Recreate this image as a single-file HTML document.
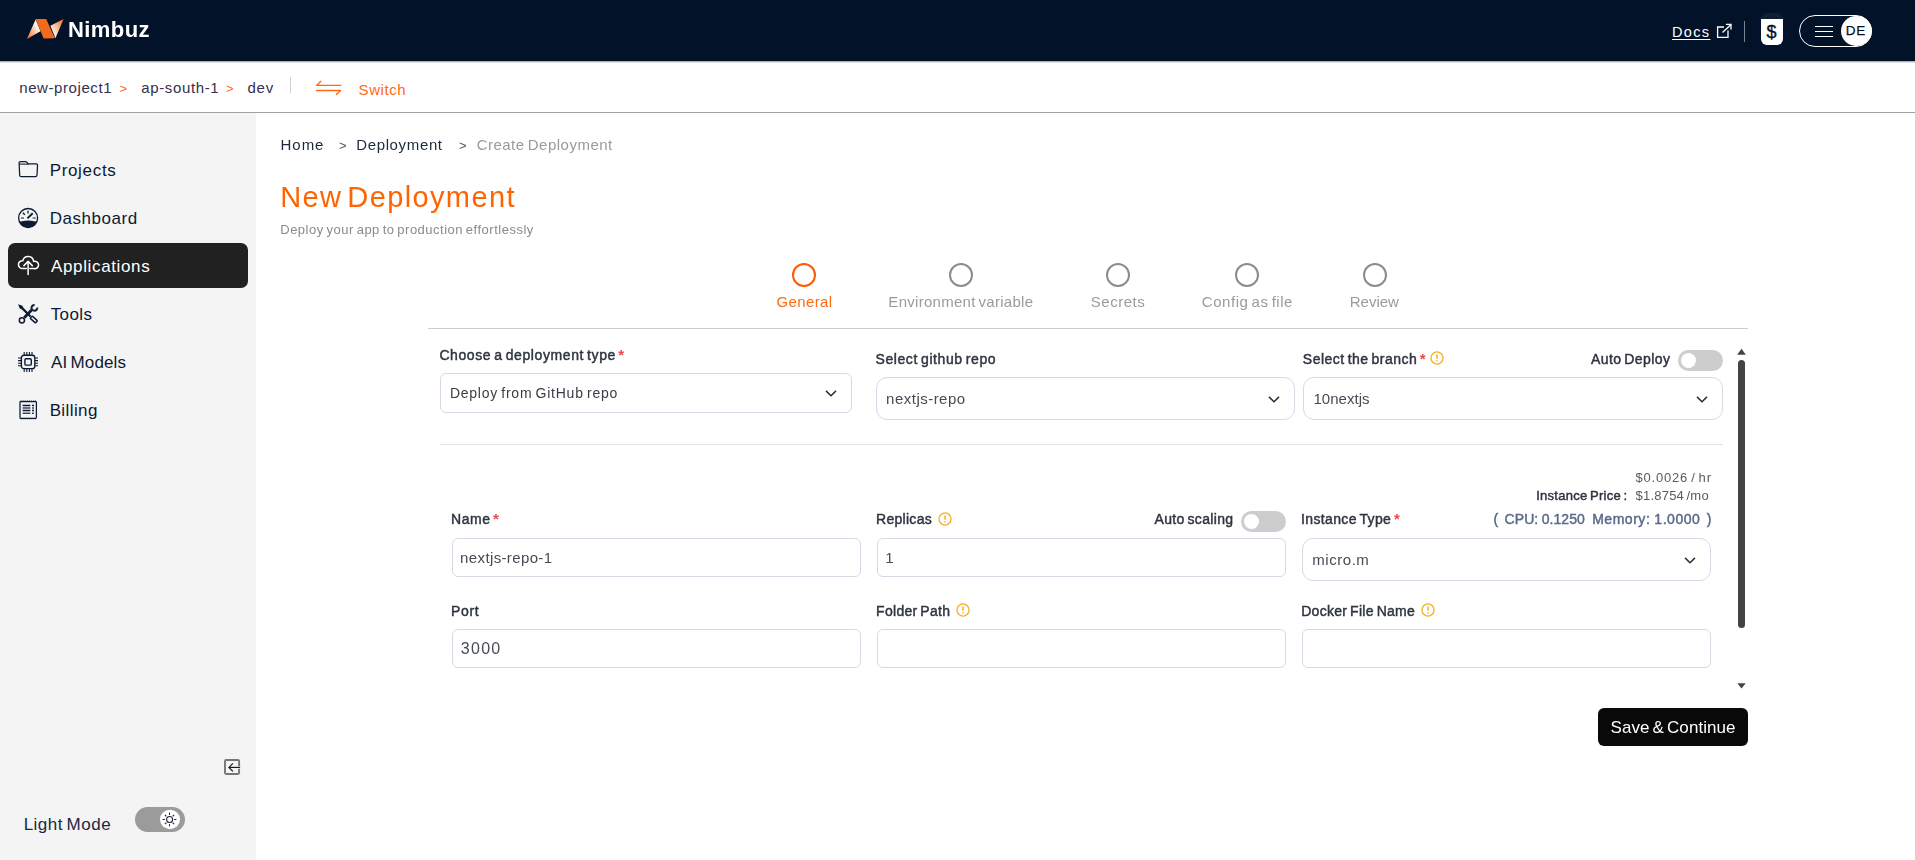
<!DOCTYPE html>
<html>
<head>
<meta charset="utf-8">
<style>
*{box-sizing:border-box;margin:0;padding:0}
html,body{width:1915px;height:860px;overflow:hidden;background:#fff;font-family:"Liberation Sans",sans-serif;color:#1e293b}
.abs{position:absolute}
.t{position:absolute;white-space:pre;line-height:1}
svg{position:absolute;overflow:visible}
</style>
</head>
<body>
<div class="abs" style="left:0px;top:0px;width:1915px;height:61px;background:#021228;"></div>
<svg style="left:0;top:0" width="80" height="61" viewBox="0 0 80 61">
<defs>
<linearGradient id="lg1" x1="0" y1="1" x2="1" y2="0"><stop offset="0" stop-color="#f26a1b"/><stop offset="0.75" stop-color="#fff"/></linearGradient>
<linearGradient id="lg2" x1="0" y1="1" x2="1" y2="0"><stop offset="0.15" stop-color="#fff"/><stop offset="1" stop-color="#f26a1b"/></linearGradient>
</defs>
<polygon points="26.9,39 35.6,19.4 40.5,31.2" fill="url(#lg1)"/>
<polygon points="50.4,25.8 63.6,19 55.4,38.2" fill="url(#lg2)"/>
<polygon points="35.6,19.1 46.2,19.1 54.8,38.3 43.6,38.6" fill="#f26a1b"/>
</svg>
<div class="t" style="left:67.57px;top:19.00px;font-size:22px;color:#fff;letter-spacing:0.432px;font-weight:bold;will-change:transform;">Nimbuz</div>
<div class="t" style="left:1672.04px;top:25.00px;font-size:14.5px;color:#fff;letter-spacing:1.344px;text-decoration:underline;text-underline-offset:2px;text-decoration-thickness:1px;">Docs</div>
<svg style="left:1715px;top:22px" width="20" height="18" viewBox="0 0 20 18" fill="none" stroke="#fff" stroke-width="1.3">
<path d="M9 5 H2.6 V15.4 H13 V8.4"/><path d="M7.5 10.5 L15.8 2.8"/><path d="M10.9 2.4 H16 V7.5"/></svg>
<div class="abs" style="left:1744px;top:21px;width:1px;height:21px;background:#7d838d;"></div>
<div class="abs" style="left:1761px;top:13px;width:22px;height:32px;background:linear-gradient(#0f1e33 0,#0f1e33 6px,#fff 6px,#fff 100%);border-radius:6px;"></div>
<div class="t" style="left:1766.62px;top:23.00px;font-size:18px;color:#021228;letter-spacing:0.170px;-webkit-text-stroke:0.35px #021228;">$</div>
<div class="abs" style="left:1799px;top:15px;width:73px;height:32px;border:1.3px solid #fff;border-radius:16px;"></div>
<div class="abs" style="left:1841.3px;top:15.7px;width:30.6px;height:30.6px;background:#fff;border-radius:50%;"></div>
<div class="abs" style="left:1815px;top:26px;width:18px;height:1px;background:#fff;"></div>
<div class="abs" style="left:1815px;top:31px;width:18px;height:1px;background:#fff;"></div>
<div class="abs" style="left:1815px;top:36px;width:18px;height:1px;background:#fff;"></div>
<div class="t" style="left:1845.72px;top:24.00px;font-size:13.5px;color:#021228;letter-spacing:0.893px;-webkit-text-stroke:0.25px #021228;">DE</div>
<div class="abs" style="left:0px;top:61px;width:1915px;height:52px;background:#fff;border-bottom:1px solid #a3a3a3;"></div>
<div class="abs" style="left:0px;top:61px;width:1915px;height:2px;background:linear-gradient(rgba(2,18,40,0.45),rgba(2,18,40,0));"></div>
<div class="t" style="left:19.22px;top:80.00px;font-size:15px;color:#35304f;letter-spacing:0.581px;">new-project1</div>
<div class="t" style="left:119.42px;top:82.00px;font-size:13px;color:#ff6a13;">&gt;</div>
<div class="t" style="left:141.30px;top:80.00px;font-size:15px;color:#35304f;letter-spacing:0.631px;">ap-south-1</div>
<div class="t" style="left:225.91px;top:82.00px;font-size:13px;color:#ff6a13;">&gt;</div>
<div class="t" style="left:247.40px;top:80.00px;font-size:15px;color:#35304f;letter-spacing:0.807px;">dev</div>
<div class="abs" style="left:290px;top:77px;width:1px;height:16px;background:#d0d0d0;"></div>
<svg style="left:314px;top:78px" width="30" height="20" viewBox="0 0 30 20" fill="none" stroke="#ff6a13" stroke-width="1.4" stroke-linejoin="round" stroke-linecap="round">
<path d="M26.8 7.4 H2.6 L6.8 3.3"/><path d="M2.4 12.5 H26.6 L22.4 16.6"/></svg>
<div class="t" style="left:358.62px;top:82.00px;font-size:15px;color:#ff6a13;letter-spacing:0.562px;">Switch</div>
<div class="abs" style="left:0px;top:113px;width:256px;height:747px;background:#f4f4f4;"></div>
<div class="abs" style="left:8px;top:243px;width:240px;height:45px;background:#212121;border-radius:7px;"></div>
<div class="t" style="left:49.64px;top:162.00px;font-size:17px;color:#0c1a33;letter-spacing:0.678px;">Projects</div>
<div class="t" style="left:49.64px;top:210.00px;font-size:17px;color:#0c1a33;letter-spacing:0.554px;">Dashboard</div>
<div class="t" style="left:51.00px;top:258.00px;font-size:17px;color:#fff;letter-spacing:0.639px;">Applications</div>
<div class="t" style="left:50.66px;top:306.00px;font-size:17px;color:#0c1a33;letter-spacing:0.387px;">Tools</div>
<div class="t" style="left:51.00px;top:354.00px;font-size:17px;color:#0c1a33;letter-spacing:0.138px;word-spacing:-1.70px;">AI Models</div>
<div class="t" style="left:49.64px;top:402.00px;font-size:17px;color:#0c1a33;letter-spacing:0.407px;">Billing</div>
<svg style="left:18px;top:160px" width="21" height="18" viewBox="0 0 21 18" fill="none" stroke="#0c1a33" stroke-width="1.25" stroke-linejoin="round">
<path d="M1.7 15.4 L1.1 3.2 Q1 1.5 2.6 1.5 H7.4 Q8.2 1.5 8.8 2.2 L10.2 3.9 H18 Q19.6 3.9 19.5 5.5 L19 15 Q18.9 16.6 17.4 16.6 H3.1 Q1.8 16.6 1.7 15.4 Z"/>
<path d="M1.2 4.1 H10.6" stroke-width="1.1"/></svg>
<svg style="left:17px;top:207px" width="22" height="22" viewBox="0 0 22 22" fill="none" stroke="#0c1a33" stroke-width="1.3">
<circle cx="11.1" cy="11" r="9.5"/>
<path d="M2.7 14.9 Q11.1 12.6 19.5 14.9 A9.3 9.3 0 0 1 2.7 14.9 Z" fill="#0c1a33" stroke-width="0.5"/>
<path d="M10.4 11.4 L15.7 6.3" stroke-width="1.9"/>
<path d="M11 3.8 V6.5" stroke-width="1.3"/><path d="M5.8 5.7 L7.9 7.8" stroke-width="1.3"/><path d="M3.9 11 H7" stroke-width="1.5" stroke="#59637a"/><path d="M15.6 11 H18.7" stroke-width="1.5" stroke="#59637a"/>
</svg>
<svg style="left:17px;top:254px" width="23" height="22" viewBox="0 0 23 22" fill="none" stroke="#fff" stroke-width="1.5" stroke-linecap="round" stroke-linejoin="round">
<path d="M9.3 14.5 H5.7 A3.92 3.92 0 1 1 5.8 6.7 A5.5 5.5 0 0 1 16.6 7.4 A3.72 3.72 0 1 1 16.9 14.5 H12.9"/>
<path d="M11.1 20.6 V7.8"/><path d="M6.9 11.6 L11.1 7.4 L15.3 11.6"/></svg>
<svg style="left:17px;top:303px" width="22" height="22" viewBox="0 0 22 22" fill="none" stroke="#0c1a33">
<path d="M1 1.2 L5.4 2.8 L6.2 4.6 L14.2 12.8 L12.8 14.2 L4.6 6.2 L2.8 5.4 Z" fill="#0c1a33" stroke="none"/>
<rect x="-3.6" y="-1.5" width="7.2" height="3" rx="0.6" transform="translate(16.8 16.5) rotate(42)" stroke-width="1.4"/>
<path d="M7.2 14.8 L14.6 7" stroke-width="2.8"/>
<circle cx="4.9" cy="17.3" r="2.6" stroke-width="1.5"/>
<path d="M17.6 1.9 A2.9 2.9 0 1 0 20.3 4.6" stroke-width="2"/>
</svg>
<svg style="left:17px;top:351px" width="22" height="22" viewBox="0 0 22 22" fill="none" stroke="#0c1a33">
<rect x="4.4" y="4.2" width="13.4" height="13.4" rx="2.4" stroke-width="1.35"/>
<rect x="7.9" y="7.7" width="6.4" height="6.4" rx="1.2" stroke-width="1.4"/>
<g stroke-width="1.1"><path d="M7.2 1 V4 M9.8 1 V4 M12.4 1 V4 M15 1 V4"/><path d="M7.2 18 V21 M9.8 18 V21 M12.4 18 V21 M15 18 V21"/>
<path d="M1 7 H4 M1 9.6 H4 M1 12.2 H4 M1 14.8 H4"/><path d="M18 7 H21 M18 9.6 H21 M18 12.2 H21 M18 14.8 H21"/></g></svg>
<svg style="left:19px;top:400px" width="19" height="20" viewBox="0 0 19 20" fill="none" stroke="#0c1a33">
<rect x="1" y="1.5" width="16.4" height="16.8" rx="0.8" stroke-width="1.25"/>
<path d="M1.4 1.3 H17" stroke-width="1.4" stroke-dasharray="1.2 0.9"/>
<path d="M1.4 18.6 H17" stroke-width="1.4" stroke-dasharray="1.2 0.9"/>
<g stroke-width="1.5"><path d="M3.6 5.4 H11.4 M13 5.4 H15"/><path d="M3.6 8 H11.4 M13 8 H15" stroke="#3a465e"/><path d="M3.6 10.6 H11.4 M13 10.6 H15"/><path d="M3.6 13.2 H11.4 M13 13.2 H15" stroke="#3a465e"/></g></svg>
<svg style="left:223px;top:758px" width="18" height="18" viewBox="0 0 18 18" fill="none">
<rect x="2" y="2" width="14.1" height="14" rx="1.2" stroke="#757575" stroke-width="1.9"/>
<path d="M16.1 8.2 V10.7" stroke="#f4f4f4" stroke-width="2.2"/>
<path d="M17.1 9.4 H6.4" stroke="#1a1a1a" stroke-width="1.15"/><path d="M9.9 5.3 L5.9 9.4 L9.9 13.4" stroke="#1a1a1a" stroke-width="1.2"/></svg>
<div class="t" style="left:23.64px;top:816.00px;font-size:17px;color:#1a2844;letter-spacing:0.505px;word-spacing:-1.70px;">Light Mode</div>
<div class="abs" style="left:135px;top:807px;width:50px;height:25px;background:#9b9b9b;border-radius:12.5px;"></div>
<svg style="left:158px;top:807px" width="24" height="25" viewBox="0 0 24 25"><ellipse cx="12" cy="12.45" rx="10" ry="9.7" fill="#fff"/></svg>
<svg style="left:161px;top:811px" width="17" height="17" viewBox="0 0 17 17" fill="none" stroke="#1b2740" stroke-width="1.05">
<circle cx="8.6" cy="8.5" r="3"/><path d="M8.5 1.6 V4 M8.5 13 V15.4 M1.6 8.5 H4 M13 8.5 H15.4 " stroke="#3d2a22" stroke-width="1"/><path d="M3.9 3.9 L5.4 5.4 M11.6 11.6 L13.1 13.1 M3.9 13.1 L5.4 11.6 M11.6 5.4 L13.1 3.9" stroke="#3d2a22" stroke-width="1.25"/></svg>
<div style="position:absolute;left:0;top:0;width:1915px;height:860px;will-change:transform">
<div class="t" style="left:280.60px;top:137.00px;font-size:15px;color:#1e293b;letter-spacing:0.935px;">Home</div>
<div class="t" style="left:339.02px;top:139.00px;font-size:13px;color:#555;">&gt;</div>
<div class="t" style="left:356.20px;top:137.00px;font-size:15px;color:#1e293b;letter-spacing:0.645px;">Deployment</div>
<div class="t" style="left:458.92px;top:139.00px;font-size:13px;color:#555;">&gt;</div>
<div class="t" style="left:476.65px;top:137.00px;font-size:15px;color:#9a9a9a;letter-spacing:0.491px;word-spacing:-1.50px;">Create Deployment</div>
<div class="t" style="left:280.28px;top:183.00px;font-size:29px;color:#ff6400;letter-spacing:1.376px;word-spacing:-4.50px;">New Deployment</div>
<div class="t" style="left:280.26px;top:223.00px;font-size:13px;color:#8b8b8b;letter-spacing:0.502px;word-spacing:-1.30px;">Deploy your app to production effortlessly</div>
<div class="abs" style="left:792px;top:263px;width:24px;height:24px;border:2px solid #ff5a00;border-radius:50%;"></div>
<div class="t" style="left:776.55px;top:294.00px;font-size:15px;color:#ff6a13;letter-spacing:0.353px;">General</div>
<div class="abs" style="left:949px;top:263px;width:24px;height:24px;border:2px solid #8c8c8c;border-radius:50%;"></div>
<div class="t" style="left:888.35px;top:294.00px;font-size:15px;color:#9b9b9b;letter-spacing:0.279px;word-spacing:-1.50px;">Environment variable</div>
<div class="abs" style="left:1106px;top:263px;width:24px;height:24px;border:2px solid #8c8c8c;border-radius:50%;"></div>
<div class="t" style="left:1090.83px;top:294.00px;font-size:15px;color:#9b9b9b;letter-spacing:0.491px;">Secrets</div>
<div class="abs" style="left:1235px;top:263px;width:24px;height:24px;border:2px solid #8c8c8c;border-radius:50%;"></div>
<div class="t" style="left:1201.85px;top:294.00px;font-size:15px;color:#9b9b9b;letter-spacing:0.527px;word-spacing:-1.50px;">Config as file</div>
<div class="abs" style="left:1363px;top:263px;width:24px;height:24px;border:2px solid #8c8c8c;border-radius:50%;"></div>
<div class="t" style="left:1349.80px;top:294.00px;font-size:15px;color:#9b9b9b;letter-spacing:-0.005px;">Review</div>
<div class="abs" style="left:428px;top:328px;width:1320px;height:1px;background:#c9ccd1;"></div>
<div class="t" style="left:439.40px;top:348.00px;font-size:14px;color:#2f3440;letter-spacing:0.592px;word-spacing:-1.40px;-webkit-text-stroke:0.45px #2f3440;">Choose a deployment type</div>
<div class="t" style="left:618.20px;top:347.00px;font-size:15px;color:#e8484c;font-weight:bold;">*</div>
<div class="abs" style="left:440px;top:373px;width:412px;height:40px;border:1px solid #d6d9e4;border-radius:6px;background:#fff;"></div>
<div class="t" style="left:449.88px;top:386.00px;font-size:14px;color:#3b3d44;letter-spacing:0.761px;word-spacing:-1.40px;">Deploy from GitHub repo</div>
<svg style="left:825px;top:390px" width="12" height="8" viewBox="0 0 12 8" fill="none" stroke="#2a2e38" stroke-width="1.5"><path d="M1 0.9 L6 5.8 L11 0.9"/></svg>
<div class="t" style="left:875.47px;top:352.00px;font-size:14px;color:#2f3440;letter-spacing:0.591px;word-spacing:-1.40px;-webkit-text-stroke:0.45px #2f3440;">Select github repo</div>
<div class="abs" style="left:876px;top:377px;width:419px;height:43px;border:1px solid #d6d9e4;border-radius:11px;background:#fff;"></div>
<div class="t" style="left:886.12px;top:391.00px;font-size:15px;color:#474b55;letter-spacing:0.479px;">nextjs-repo</div>
<svg style="left:1268px;top:396px" width="12" height="8" viewBox="0 0 12 8" fill="none" stroke="#2a2e38" stroke-width="1.5"><path d="M1 0.9 L6 5.8 L11 0.9"/></svg>
<div class="t" style="left:1302.87px;top:352.00px;font-size:14px;color:#2f3440;letter-spacing:0.483px;word-spacing:-1.40px;-webkit-text-stroke:0.45px #2f3440;">Select the branch</div>
<div class="t" style="left:1419.80px;top:351.00px;font-size:15px;color:#e8484c;font-weight:bold;">*</div>
<svg style="left:1428.6px;top:350.4px" width="16" height="16" viewBox="0 0 16 16" fill="none" stroke="#f6b022" stroke-width="1.3">
<circle cx="8" cy="8" r="6.05"/><path d="M8 4.6 V8.8" stroke-width="1.5"/><path d="M8 10.2 V11.6" stroke-width="1.5"/></svg>
<div class="t" style="left:1591.10px;top:352.00px;font-size:14px;color:#2f3440;letter-spacing:0.393px;word-spacing:-1.40px;-webkit-text-stroke:0.45px #2f3440;">Auto Deploy</div>
<div class="abs" style="left:1678px;top:350px;width:45px;height:21px;background:#cdcdcd;border-radius:10.5px;"></div>
<div class="abs" style="left:1681px;top:353.0px;width:15px;height:15px;background:#fff;border-radius:50%;"></div>
<div class="abs" style="left:1303px;top:377px;width:420px;height:43px;border:1px solid #d6d9e4;border-radius:11px;background:#fff;"></div>
<div class="t" style="left:1313.38px;top:391.00px;font-size:15px;color:#474b55;letter-spacing:0.040px;">10nextjs</div>
<svg style="left:1696px;top:395.5px" width="12" height="8" viewBox="0 0 12 8" fill="none" stroke="#2a2e38" stroke-width="1.5"><path d="M1 0.9 L6 5.8 L11 0.9"/></svg>
<div class="abs" style="left:440px;top:444px;width:1283px;height:1px;background:#dfe3ea;"></div>
<div class="t" style="left:1635.57px;top:471.00px;font-size:13px;color:#555b66;letter-spacing:0.783px;word-spacing:-1.30px;">$0.0026 / hr</div>
<div class="t" style="left:1536.13px;top:489.00px;font-size:13px;color:#2f3440;letter-spacing:0.274px;word-spacing:-1.30px;-webkit-text-stroke:0.45px #2f3440;">Instance Price :</div>
<div class="t" style="left:1635.57px;top:489.00px;font-size:13px;color:#555b66;letter-spacing:0.209px;word-spacing:-1.30px;">$1.8754 /mo</div>
<div class="t" style="left:451.08px;top:512.00px;font-size:14px;color:#2f3440;letter-spacing:0.517px;-webkit-text-stroke:0.45px #2f3440;">Name</div>
<div class="t" style="left:493.10px;top:511.00px;font-size:15px;color:#e8484c;font-weight:bold;">*</div>
<div class="abs" style="left:452px;top:538px;width:409px;height:39px;border:1px solid #d6d9e4;border-radius:6px;background:#fff;"></div>
<div class="t" style="left:460.12px;top:550.00px;font-size:15px;color:#474b55;letter-spacing:0.369px;">nextjs-repo-1</div>
<div class="t" style="left:876.08px;top:512.00px;font-size:14px;color:#2f3440;letter-spacing:0.274px;-webkit-text-stroke:0.45px #2f3440;">Replicas</div>
<svg style="left:937.0px;top:510.9px" width="16" height="16" viewBox="0 0 16 16" fill="none" stroke="#f6b022" stroke-width="1.3">
<circle cx="8" cy="8" r="6.05"/><path d="M8 4.6 V8.8" stroke-width="1.5"/><path d="M8 10.2 V11.6" stroke-width="1.5"/></svg>
<div class="t" style="left:1154.60px;top:512.00px;font-size:14px;color:#2f3440;letter-spacing:0.326px;word-spacing:-1.40px;-webkit-text-stroke:0.45px #2f3440;">Auto scaling</div>
<div class="abs" style="left:1241px;top:511px;width:45px;height:21px;background:#cdcdcd;border-radius:10.5px;"></div>
<div class="abs" style="left:1244px;top:514.0px;width:15px;height:15px;background:#fff;border-radius:50%;"></div>
<div class="abs" style="left:877px;top:538px;width:409px;height:39px;border:1px solid #d6d9e4;border-radius:6px;background:#fff;"></div>
<div class="t" style="left:885.27px;top:550.00px;font-size:15px;color:#474b55;">1</div>
<div class="t" style="left:1301.04px;top:512.00px;font-size:14px;color:#2f3440;letter-spacing:0.360px;word-spacing:-1.40px;-webkit-text-stroke:0.45px #2f3440;">Instance Type</div>
<div class="t" style="left:1394.00px;top:511.00px;font-size:15px;color:#e8484c;font-weight:bold;">*</div>
<div class="t" style="left:1493.56px;top:512.00px;font-size:14px;color:#5a6a8a;-webkit-text-stroke:0.45px #5a6a8a;">(</div>
<div class="t" style="left:1504.60px;top:512.00px;font-size:14px;color:#5a6a8a;letter-spacing:0.045px;word-spacing:-0.40px;-webkit-text-stroke:0.45px #5a6a8a;">CPU: 0.1250</div>
<div class="t" style="left:1592.18px;top:512.00px;font-size:14px;color:#5a6a8a;letter-spacing:0.528px;word-spacing:-0.40px;-webkit-text-stroke:0.45px #5a6a8a;">Memory: 1.0000</div>
<div class="t" style="left:1706.63px;top:512.00px;font-size:14px;color:#5a6a8a;-webkit-text-stroke:0.45px #5a6a8a;">)</div>
<div class="abs" style="left:1302px;top:538px;width:409px;height:43px;border:1px solid #d6d9e4;border-radius:11px;background:#fff;"></div>
<div class="t" style="left:1312.23px;top:552.00px;font-size:15px;color:#474b55;letter-spacing:0.549px;">micro.m</div>
<svg style="left:1684px;top:556.5px" width="12" height="8" viewBox="0 0 12 8" fill="none" stroke="#2a2e38" stroke-width="1.5"><path d="M1 0.9 L6 5.8 L11 0.9"/></svg>
<div class="t" style="left:451.08px;top:604.00px;font-size:14px;color:#2f3440;letter-spacing:0.628px;-webkit-text-stroke:0.45px #2f3440;">Port</div>
<div class="abs" style="left:452px;top:629px;width:409px;height:39px;border:1px solid #d6d9e4;border-radius:6px;background:#fff;"></div>
<div class="t" style="left:460.84px;top:641.00px;font-size:16px;color:#474b55;letter-spacing:1.281px;">3000</div>
<div class="t" style="left:876.08px;top:604.00px;font-size:14px;color:#2f3440;letter-spacing:0.300px;word-spacing:-1.40px;-webkit-text-stroke:0.45px #2f3440;">Folder Path</div>
<svg style="left:955.2px;top:601.9px" width="16" height="16" viewBox="0 0 16 16" fill="none" stroke="#f6b022" stroke-width="1.3">
<circle cx="8" cy="8" r="6.05"/><path d="M8 4.6 V8.8" stroke-width="1.5"/><path d="M8 10.2 V11.6" stroke-width="1.5"/></svg>
<div class="abs" style="left:877px;top:629px;width:409px;height:39px;border:1px solid #d6d9e4;border-radius:6px;background:#fff;"></div>
<div class="t" style="left:1301.18px;top:604.00px;font-size:14px;color:#2f3440;letter-spacing:0.298px;word-spacing:-1.40px;-webkit-text-stroke:0.45px #2f3440;">Docker File Name</div>
<svg style="left:1420.2px;top:602.0px" width="16" height="16" viewBox="0 0 16 16" fill="none" stroke="#f6b022" stroke-width="1.3">
<circle cx="8" cy="8" r="6.05"/><path d="M8 4.6 V8.8" stroke-width="1.5"/><path d="M8 10.2 V11.6" stroke-width="1.5"/></svg>
<div class="abs" style="left:1302px;top:629px;width:409px;height:39px;border:1px solid #d6d9e4;border-radius:6px;background:#fff;"></div>
<svg style="left:1737px;top:349px" width="9" height="6" viewBox="0 0 9 6"><path d="M0.2 5.8 L4.5 -0.2 L8.8 5.8 Z" fill="#444"/></svg>
<div class="abs" style="left:1738px;top:360px;width:7px;height:268px;background:#434343;border-radius:3.5px;"></div>
<svg style="left:1737px;top:683px" width="9" height="6" viewBox="0 0 9 6"><path d="M0.3 0.3 L4.5 5.6 L8.7 0.3 Z" fill="#444"/></svg>
<div class="abs" style="left:1598px;top:708px;width:150px;height:38px;background:#090909;border-radius:6px;"></div>
<div class="t" style="left:1610.53px;top:719.00px;font-size:17px;color:#fff;letter-spacing:0.056px;word-spacing:-1.70px;">Save &amp; Continue</div>
</div>
</body>
</html>
